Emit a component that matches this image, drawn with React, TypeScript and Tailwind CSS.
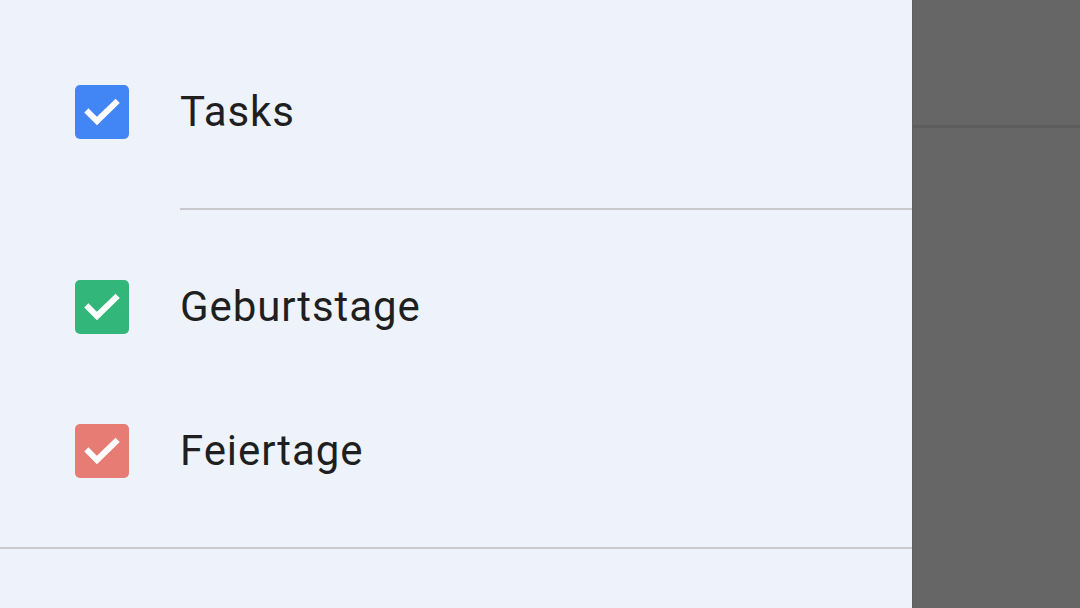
import React from 'react';

type Item = { label: string; color: string };

const Check: React.FC<{ color: string }> = ({ color }) => (
  <div className={`w-[54px] h-[54px] rounded-[5px] shrink-0 ${color}`}>
    <svg viewBox="0 0 54 54" width="54" height="54">
      <path d="M13.5 27.5 L22 36 L40.5 18" fill="none" stroke="white" strokeWidth="6" strokeLinecap="square" strokeLinejoin="miter" />
    </svg>
  </div>
);

const Row: React.FC<Item> = ({ label, color }) => (
  <div className="h-[144px] flex items-center pl-[75px]">
    <Check color={color} />
    <span className="ml-[51px] text-[42px] leading-none text-[#1f1f1f] tracking-[0.9px]">{label}</span>
  </div>
);

export default function App() {
  return (
    <div className="w-[1080px] h-[608px] flex overflow-hidden" style={{ fontFamily: 'Roboto, "Noto Sans", sans-serif' }}>
      <div className="w-[912px] h-full bg-[#eef3fb] flex flex-col">
        <div className="h-[40px]" />
        <Row label="Tasks" color="bg-[#4285f4]" />
        <div className="h-[24px]" />
        <div className="h-[2px] ml-[180px] bg-[#c7c9cd]" />
        <div className="h-[25px]" />
        <Row label="Geburtstage" color="bg-[#33b679]" />
        <Row label="Feiertage" color="bg-[#e67c73]" />
        <div className="h-[24px]" />
        <div className="h-[2px] bg-[#c7c9cd]" />
      </div>
      <div className="flex-1 h-full bg-[#666666] border-l border-[#5f5f5f] flex flex-col">
        <div className="h-[125px]" />
        <div className="h-[3px] bg-[#5d5d5d]" />
      </div>
    </div>
  );
}
